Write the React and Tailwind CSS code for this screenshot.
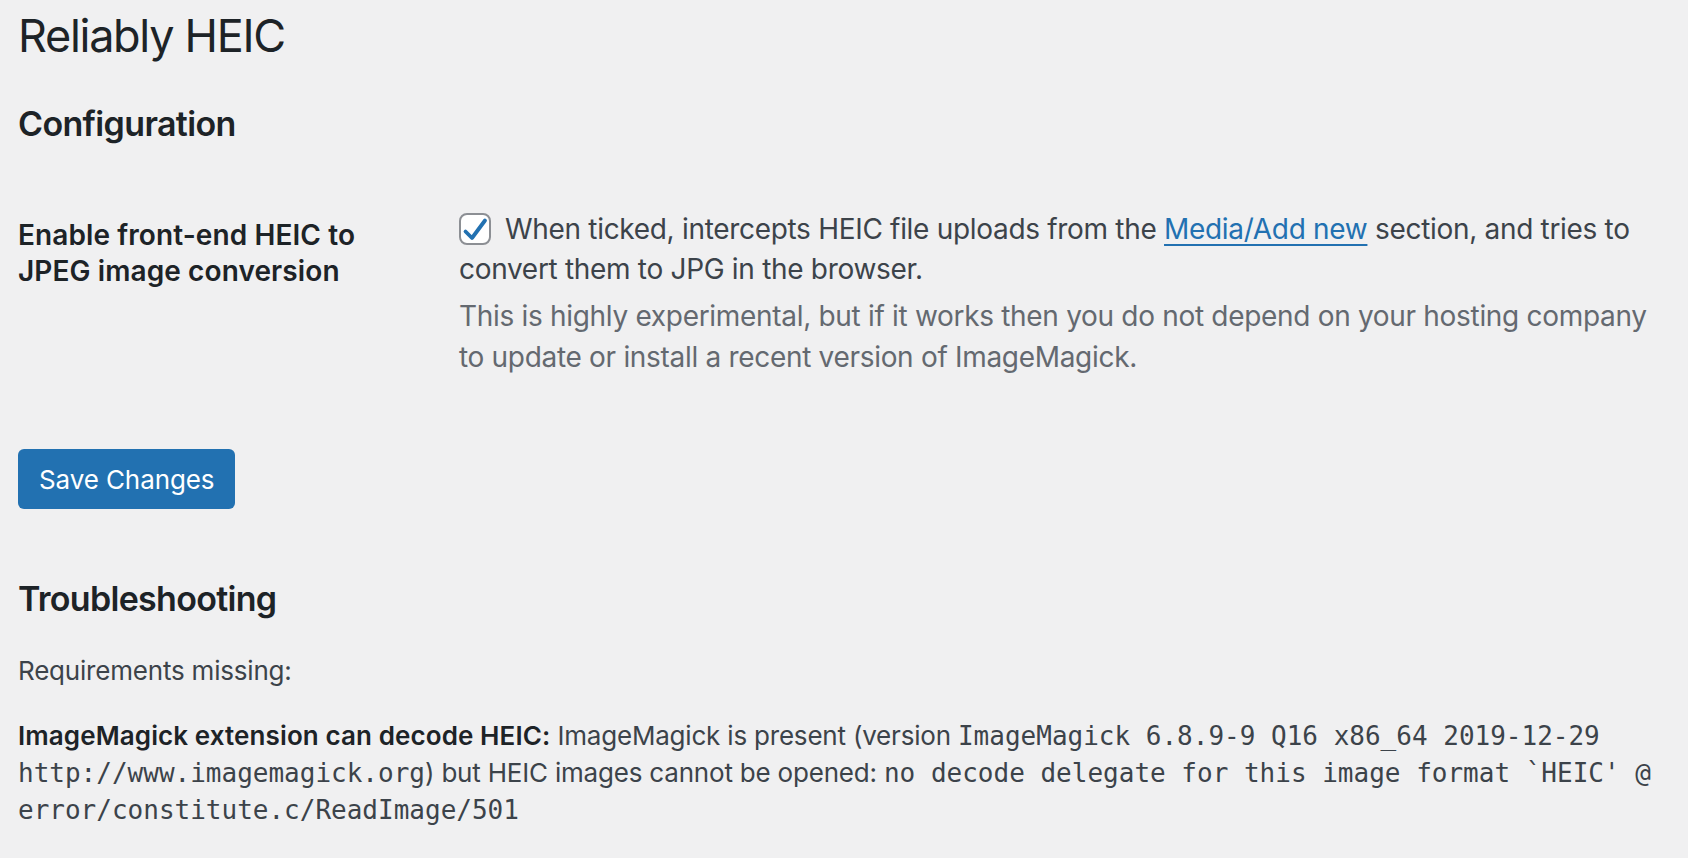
import React from "react";

function Checkbox() {
  return (
    <span className="relative inline-block w-[32px] h-[32px] rounded-[8px] border-2 border-[#8c8f94] bg-white align-middle mr-[14px] -top-[2px]">
      <svg viewBox="0 0 28 28" className="absolute inset-0 w-[28px] h-[28px]">
        <path d="M4.5 16.5 L11 23 L24 5.5" fill="none" stroke="#2271b1" strokeWidth="3.8" strokeLinecap="round" strokeLinejoin="round" />
      </svg>
    </span>
  );
}

export default function App() {
  const mono = { fontFamily: '"DejaVu Sans Mono", monospace' };
  return (
    <div className="min-h-screen bg-[#f0f0f1] pl-[18px] pr-[20px] text-[#3c434a]" style={{ fontFamily: 'Inter, "Noto Sans", sans-serif' }}>
      <h1 className="pt-[6px] text-[45px] leading-[60px] font-normal text-[#1d2327] tracking-[-1.3px]">Reliably HEIC</h1>
      <h2 className="mt-[36px] text-[34px] leading-[44px] font-semibold text-[#1d2327] tracking-[-0.65px]">Configuration</h2>

      <div className="mt-[31px] flex">
        <div className="w-[441px] shrink-0 pt-[40px] text-[28px] leading-[36px] font-semibold text-[#1d2327] tracking-[0.1px]">
          Enable front-end HEIC to<br />JPEG image conversion
        </div>
        <div className="pt-[32px] text-[28px] tracking-[-0.31px]">
          <div className="leading-[40px] whitespace-nowrap">
            <Checkbox />
            When ticked, intercepts HEIC file uploads from the{" "}
            <a href="#" className="text-[#2271b1] underline underline-offset-[5px] decoration-[2px]">Media/Add new</a>{" "}
            section, and tries to
          </div>
          <div className="leading-[40px] whitespace-nowrap">convert them to JPG in the browser.</div>
          <p className="mt-[7px] leading-[41px] text-[#646970] whitespace-nowrap">
            This is highly experimental, but if it works then you do not depend on your hosting company<br />
            to update or install a recent version of ImageMagick.
          </p>
        </div>
      </div>

      <div className="mt-[71px]">
        <button className="h-[60px] px-[21px] rounded-[6px] bg-[#2271b1] text-white text-[26px] tracking-[-0.1px]">Save Changes</button>
      </div>

      <h2 className="mt-[68px] text-[34px] leading-[44px] font-semibold text-[#1d2327] tracking-[-0.7px]">Troubleshooting</h2>
      <p className="mt-[32px] text-[26px] leading-[36px] tracking-[-0.2px]">Requirements missing:</p>
      <p className="mt-[28px] text-[26px] leading-[37px] tracking-[-0.2px] whitespace-nowrap">
        <strong className="font-semibold text-[#1d2327] tracking-[0.1px]">ImageMagick extension can decode HEIC:</strong> ImageMagick is present (version{" "}
        <code className="leading-none tracking-normal" style={mono}>ImageMagick 6.8.9-9 Q16 x86_64 2019-12-29</code>
        <br />
        <code className="leading-none tracking-normal" style={mono}>http://www.imagemagick.org</code>) but HEIC images cannot be opened:{" "}
        <code className="leading-none tracking-normal" style={mono}>no decode delegate for this image format `HEIC' @</code>
        <br />
        <code className="leading-none tracking-normal" style={mono}>error/constitute.c/ReadImage/501</code>
      </p>
    </div>
  );
}
